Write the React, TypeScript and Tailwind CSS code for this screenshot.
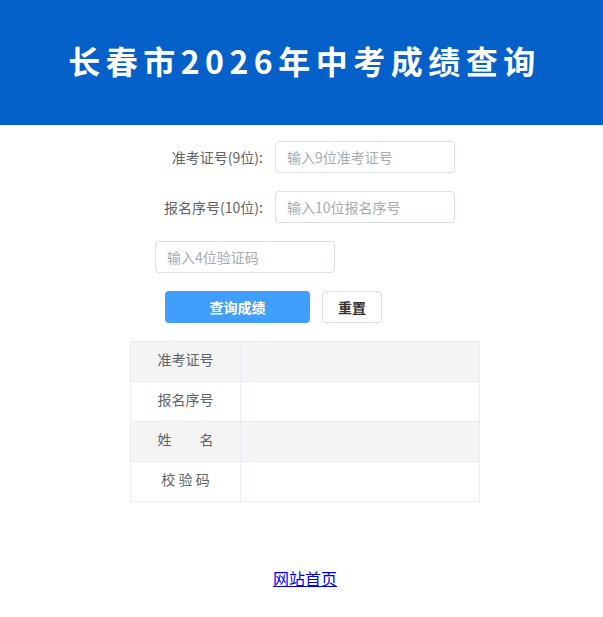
const font = "font-['Microsoft_YaHei','Noto_Sans_CJK_SC',sans-serif]"

function Field({ label, placeholder }: { label?: string; placeholder: string }) {
  return (
    <div className="flex items-center h-8 mb-[18px]">
      {label !== undefined && (
        <label className="w-[120px] pr-3 text-right text-sm text-[#606266]">{label}</label>
      )}
      <input
        placeholder={placeholder}
        className="w-[180px] h-8 px-[11px] rounded border border-[#dcdfe6] text-sm text-[#606266] placeholder:text-[#a8abb2] outline-none"
      />
    </div>
  )
}

const rows = [
  { name: "准考证号", shade: true },
  { name: "报名序号", shade: false },
  { name: "姓\u3000\u3000名", shade: true },
  { name: "校 验 码", shade: false },
]

export default function App() {
  return (
    <div className={`min-h-screen bg-white ${font}`}>
      <header className="h-[125px] bg-[#0561c9] flex items-center justify-center pb-[6px] pl-[6px]">
        <h1 className="text-[32px] leading-none font-bold text-white tracking-[5.5px] font-['Noto_Sans_CJK_SC',sans-serif]">
          长春市2026年中考成绩查询
        </h1>
      </header>

      <main className="pl-[7px] pt-4">
        <form className="w-[300px] mx-auto" onSubmit={(e) => e.preventDefault()}>
          <Field label="准考证号(9位):" placeholder="输入9位准考证号" />
          <Field label="报名序号(10位):" placeholder="输入10位报名序号" />
          <Field placeholder="输入4位验证码" />
          <div className="flex items-center gap-3 pl-[10px] mb-[18px]">
            <button className="w-[145px] h-8 rounded bg-[#409eff] text-white text-sm font-bold">
              查询成绩
            </button>
            <button
              type="reset"
              className="w-[60px] h-8 rounded border border-[#dcdfe6] bg-white text-[#333] text-sm font-bold"
            >
              重置
            </button>
          </div>
        </form>

        <table className="w-[350px] mx-auto border-collapse text-sm text-[#606266]">
          <tbody>
            {rows.map((r) => (
              <tr key={r.name} className={r.shade ? "bg-[#f4f4f5]" : "bg-white"}>
                <td className="w-[110px] h-10 pb-[5px] border border-[#ebeef5] text-center whitespace-pre">
                  {r.name}
                </td>
                <td className="h-10 border border-[#ebeef5]"></td>
              </tr>
            ))}
          </tbody>
        </table>

        <div className="mt-[64px] text-center">
          <a href="#" className="text-base text-[#0000ee] underline">
            网站首页
          </a>
        </div>
      </main>
    </div>
  )
}
